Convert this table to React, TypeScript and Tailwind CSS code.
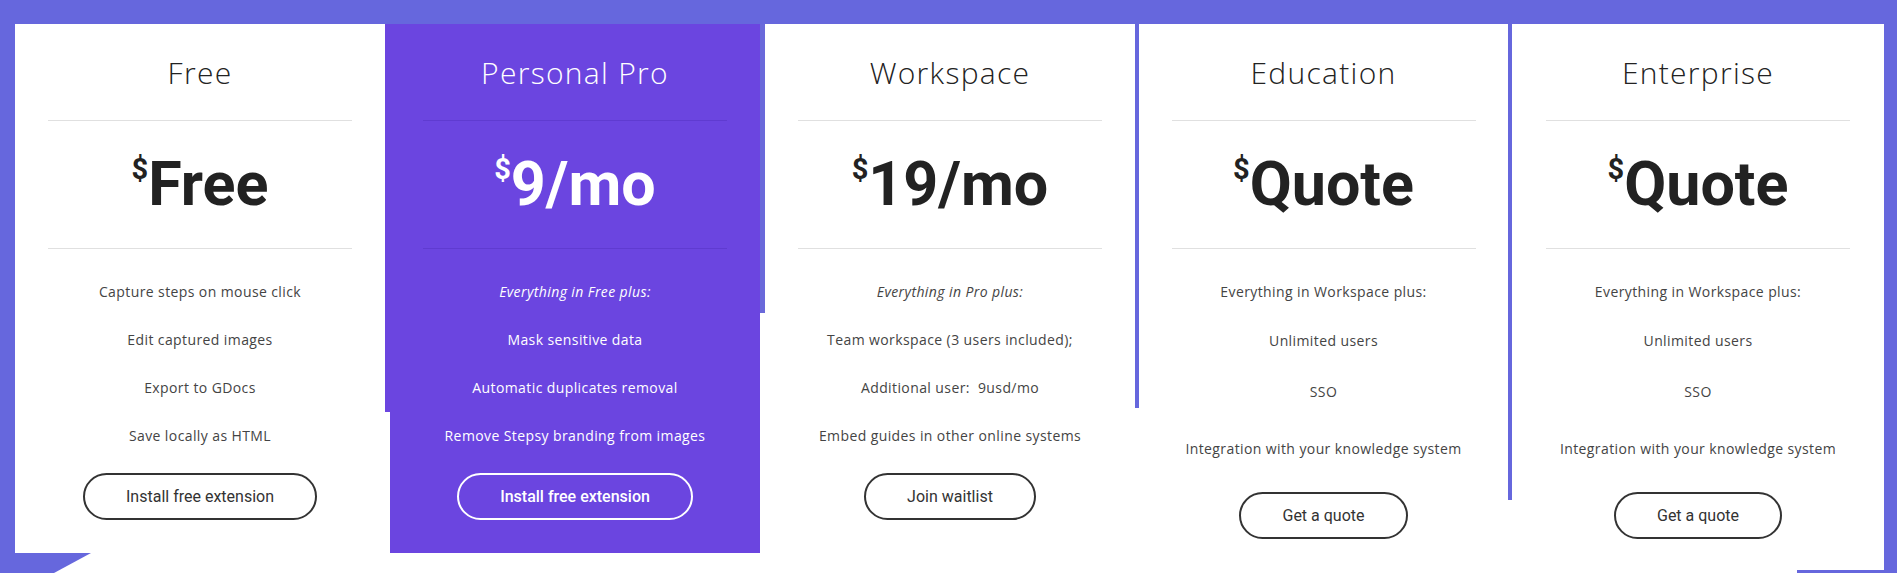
import React from 'react'

type Feature = { text: string; italic?: boolean; gap: string }

type Plan = {
  name: string
  price: string
  features: Feature[]
  button: string
  buttonGap: string
  featured?: boolean
}

const plans: Plan[] = [
  {
    name: 'Free',
    price: 'Free',
    features: [
      { text: 'Capture steps on mouse click', gap: 'mt-[33px]' },
      { text: 'Edit captured images', gap: 'mt-[28px]' },
      { text: 'Export to GDocs', gap: 'mt-[28px]' },
      { text: 'Save locally as HTML', gap: 'mt-[28px]' },
    ],
    button: 'Install free extension',
    buttonGap: 'mt-[27px]',
  },
  {
    name: 'Personal Pro',
    price: '9/mo',
    featured: true,
    features: [
      { text: 'Everything in Free plus:', italic: true, gap: 'mt-[33px]' },
      { text: 'Mask sensitive data', gap: 'mt-[28px]' },
      { text: 'Automatic duplicates removal', gap: 'mt-[28px]' },
      { text: 'Remove Stepsy branding from images', gap: 'mt-[28px]' },
    ],
    button: 'Install free extension',
    buttonGap: 'mt-[27px]',
  },
  {
    name: 'Workspace',
    price: '19/mo',
    features: [
      { text: 'Everything in Pro plus:', italic: true, gap: 'mt-[33px]' },
      { text: 'Team workspace (3 users included);', gap: 'mt-[28px]' },
      { text: 'Additional user:\u00a0 9usd/mo', gap: 'mt-[28px]' },
      { text: 'Embed guides in other online systems', gap: 'mt-[28px]' },
    ],
    button: 'Join waitlist',
    buttonGap: 'mt-[27px]',
  },
  {
    name: 'Education',
    price: 'Quote',
    features: [
      { text: 'Everything in Workspace plus:', gap: 'mt-[33px]' },
      { text: 'Unlimited users', gap: 'mt-[29px]' },
      { text: 'SSO', gap: 'mt-[31px]' },
      { text: 'Integration with your knowledge system', gap: 'mt-[37px]' },
    ],
    button: 'Get a quote',
    buttonGap: 'mt-[33px]',
  },
  {
    name: 'Enterprise',
    price: 'Quote',
    features: [
      { text: 'Everything in Workspace plus:', gap: 'mt-[33px]' },
      { text: 'Unlimited users', gap: 'mt-[29px]' },
      { text: 'SSO', gap: 'mt-[31px]' },
      { text: 'Integration with your knowledge system', gap: 'mt-[37px]' },
    ],
    button: 'Get a quote',
    buttonGap: 'mt-[33px]',
  },
]

const titleFont = { fontFamily: '"Open Sans", "Liberation Sans", sans-serif' }
const bodyFont = { fontFamily: '"Open Sans", "Liberation Sans", sans-serif' }
const priceFont = { fontFamily: 'Roboto, "Liberation Sans", sans-serif' }

function PlanCard({ plan, width, height }: { plan: Plan; width: string; height: string }) {
  const dark = plan.featured
  return (
    <div
      className={`${width} ${height} shrink-0 flex flex-col items-center pt-[31px] ${
        dark ? 'bg-[#6b45e0] text-white' : 'bg-white text-[#222]'
      }`}
    >
      {/* Title */}
      <h2 className="text-[30px] leading-[36px] font-light tracking-[1.3px]" style={titleFont}>
        {plan.name}
      </h2>
      <div className={`mt-[29px] h-px w-[304px] ${dark ? 'bg-[#5f3bd0]' : 'bg-[#e0e0e0]'}`} />

      {/* Price */}
      <div className="mt-[33px] flex items-start" style={priceFont}>
        <span className="text-[29px] leading-none font-bold mt-[1px]">$</span>
        <span className="text-[61px] leading-none font-bold">{plan.price}</span>
      </div>
      <div className={`mt-[33px] h-px w-[304px] ${dark ? 'bg-[#5f3bd0]' : 'bg-[#e0e0e0]'}`} />

      {/* Features */}
      {plan.features.map((f) => (
        <p
          key={f.text}
          className={`${f.gap} text-[14px] leading-[20px] tracking-[0.4px] ${f.italic ? 'italic' : ''} ${
            dark ? 'text-white font-medium' : 'text-[#444]'
          } ${dark && f.italic ? 'font-normal' : ''}`}
          style={bodyFont}
        >
          {f.text}
        </p>
      ))}

      <button
        className={`${plan.buttonGap} h-[47px] px-[41px] rounded-full border-2 text-[16px] ${
          dark ? 'border-white text-white font-medium' : 'border-[#333] text-[#333]'
        }`}
        style={priceFont}
      >
        {plan.button}
      </button>
    </div>
  )
}

export default function App() {
  return (
    <div className="w-[1897px] h-[573px] bg-[#6667dd] pt-[24px] pl-[15px] pr-[13px] overflow-hidden">
      <div className="relative h-full bg-white flex items-start">
        <PlanCard plan={plans[0]} width="w-[370px]" height="h-[529px]" />
        <div className="w-[5px] h-[388px] bg-[#6b45e0] shrink-0" />
        <PlanCard plan={plans[1]} width="w-[370px]" height="h-[529px]" />
        <div className="w-[5px] h-[289px] bg-[#6a69da] shrink-0" />
        <PlanCard plan={plans[2]} width="w-[370px]" height="h-full" />
        <div className="w-[4px] h-[384px] bg-[#6667dd] shrink-0" />
        <PlanCard plan={plans[3]} width="w-[369px]" height="h-full" />
        <div className="w-[4px] h-[476px] bg-[#6667dd] shrink-0" />
        <PlanCard plan={plans[4]} width="w-[372px]" height="h-full" />

        {/* corner decorations */}
        <svg className="absolute left-0 top-[529px]" width="80" height="20" viewBox="0 0 80 20">
          <polygon points="0,0 76,0 39,20 0,20" fill="#6667dd" />
        </svg>
        <div className="absolute right-0 bottom-0 w-[87px] h-[3px] bg-[#6667dd]" />
      </div>
    </div>
  )
}
